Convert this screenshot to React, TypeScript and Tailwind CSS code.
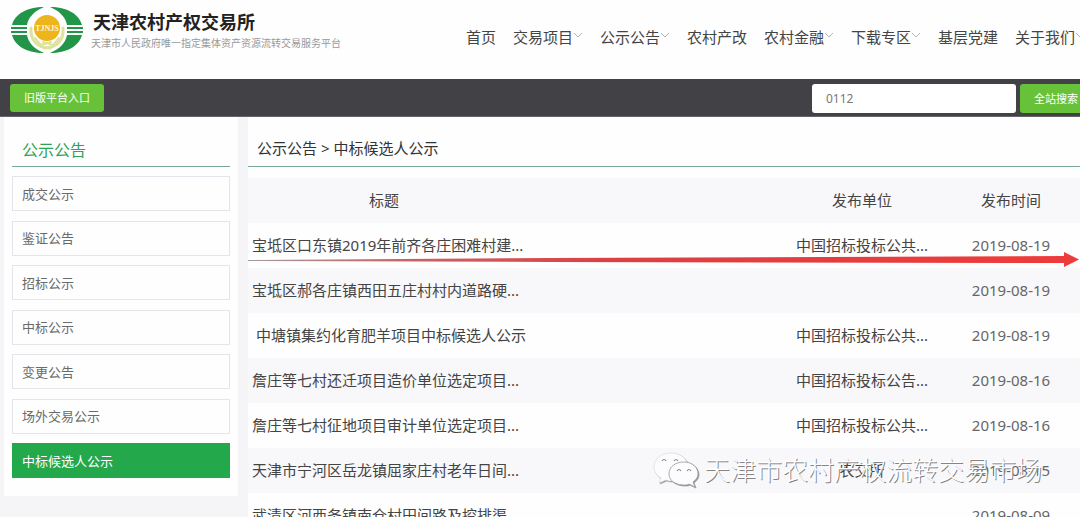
import clsx from "clsx";

const navItems = [
  { label: "首页", menu: false },
  { label: "交易项目", menu: true },
  { label: "公示公告", menu: true },
  { label: "农村产改", menu: false },
  { label: "农村金融", menu: true },
  { label: "下载专区", menu: true },
  { label: "基层党建", menu: false },
  { label: "关于我们", menu: true },
];

const categories = [
  "成交公示",
  "鉴证公告",
  "招标公示",
  "中标公示",
  "变更公告",
  "场外交易公示",
  "中标候选人公示",
];

const notices = [
  { title: "宝坻区口东镇2019年前齐各庄困难村建...", unit: "中国招标投标公共...", date: "2019-08-19" },
  { title: "宝坻区郝各庄镇西田五庄村村内道路硬...", unit: "", date: "2019-08-19" },
  { title: " 中塘镇集约化育肥羊项目中标候选人公示", unit: "中国招标投标公共...", date: "2019-08-19" },
  { title: "詹庄等七村还迁项目造价单位选定项目...", unit: "中国招标投标公告...", date: "2019-08-16" },
  { title: "詹庄等七村征地项目审计单位选定项目...", unit: "中国招标投标公共...", date: "2019-08-16" },
  { title: "天津市宁河区岳龙镇屈家庄村老年日间...", unit: "农交所", date: "2019-08-15" },
  { title: "武清区河西务镇南仓村田间路及挖排渠...", unit: "", date: "2019-08-09" },
];

function Logo() {
  return (
    <svg viewBox="0 0 72 48" className="w-[72px] h-12 shrink-0" aria-hidden="true">
      <g fill="#219548">
        <path d="M33 1C16 1 4 8 1 19H16C17 12 23 5 33 1Z" />
        <path d="M39 1C56 1 68 8 71 19H56C55 12 49 5 39 1Z" />
        <path d="M33 47C16 47 4 40 1 29H16C17 36 23 43 33 47Z" />
        <path d="M39 47C56 47 68 40 71 29H56C55 36 49 43 39 47Z" />
        <path d="M0 21H16V23H0ZM0 25H16V27H0ZM56 21H72V23H56ZM56 25H72V27H56Z" />
      </g>
      <g fill="none" stroke="#dde39c" strokeLinecap="round">
        <path d="M20 22C19 34 26 42 39 42" strokeWidth="3" />
        <path d="M52 22C53 34 46 42 33 42" strokeWidth="3" />
        <path d="M24 32L29 38M48 32L43 38M30 39L40 36M42 39L32 36" strokeWidth="2" />
      </g>
      <circle cx="36" cy="22" r="13" fill="#eeb41c" />
      <text
        x="36"
        y="25"
        textAnchor="middle"
        fill="#fff6d0"
        fontFamily="Liberation Serif, serif"
        fontWeight="bold"
        fontSize="8"
      >
        TJNJS
      </text>
    </svg>
  );
}

function Caret() {
  return (
    <svg viewBox="0 0 10 6" className="w-[10px] h-[6px] mb-1" fill="none" stroke="#b4b4b4" aria-hidden="true">
      <path d="M1 1L5 5L9 1" />
    </svg>
  );
}

function Header() {
  return (
    <header className="h-[79px] bg-[#fefefe] flex items-start">
      <a href="#" className="flex items-start gap-2 pl-[11px] pt-[6px] shrink-0">
        <Logo />
        <span className="pt-[4px]">
          <strong className="block pl-[2px] text-[18px] leading-6 text-[#222]">天津农村产权交易所</strong>
          <span className="block text-[10px] leading-[18px] text-[#999]">
            天津市人民政府唯一指定集体资产资源流转交易服务平台
          </span>
        </span>
      </a>
      <nav className="ml-auto -mr-[5px] pt-[25px] flex gap-[17px] shrink-0">
        {navItems.map((item) => (
          <a key={item.label} href="#" className="flex items-center text-[15px] leading-6 text-[#444] whitespace-nowrap">
            {item.label}
            {item.menu && <Caret />}
          </a>
        ))}
      </nav>
    </header>
  );
}

function Toolbar() {
  return (
    <div className="h-[38px] bg-[#424146] border-b border-[#666569] flex items-center justify-between pl-[10px] overflow-hidden">
      <button type="button" className="h-7 w-[94px] pt-[2px] rounded-[3px] bg-[#67c23a] text-[11px] text-white">
        旧版平台入口
      </button>
      <form className="flex items-center gap-1 -mr-3 pt-[2px]">
        <input
          type="text"
          aria-label="全站搜索"
          defaultValue="0112"
          className="w-[204px] h-[29px] rounded-[3px] bg-white px-[14px] text-[12px] text-[#777] outline-none"
        />
        <button type="button" className="h-[29px] w-[72px] pt-[2px] rounded-[3px] bg-[#67c23a] text-[11px] text-white">
          全站搜索
        </button>
      </form>
    </div>
  );
}

function Sidebar() {
  return (
    <aside className="w-[234px] shrink-0 self-start bg-[#fefefe] px-2 pb-[18px]">
      <h2 className="h-[50px] pt-[21px] pl-[10px] border-b border-[#76a795] text-[16px] leading-6 text-[#2fa354]">
        公示公告
      </h2>
      <ul className="mt-[9px] min-h-[302px] flex flex-col justify-between">
        {categories.map((name, idx) => {
          const active = idx === categories.length - 1;
          return (
            <li key={name}>
              <a
                href="#"
                className={clsx(
                  "flex items-center h-[35px] px-[9px] pt-[2px] border text-[13px]",
                  active ? "bg-[#23a84c] border-[#23a84c] text-white" : "border-[#e4e4ea] text-[#6a6a6a]"
                )}
              >
                {name}
              </a>
            </li>
          );
        })}
      </ul>
    </aside>
  );
}

function NoticeTable() {
  return (
    <table className="mt-[11px] w-full table-fixed text-[15px] text-[#444]">
      <colgroup>
        <col className="w-[272px]" />
        <col />
        <col className="w-[160px]" />
        <col className="w-[138px]" />
      </colgroup>
      <thead>
        <tr className="h-[45px] bg-[#f8f8fa]">
          <th className="font-normal">标题</th>
          <th />
          <th className="font-normal">发布单位</th>
          <th className="font-normal">发布时间</th>
        </tr>
      </thead>
      <tbody>
        {notices.map((row) => (
          <tr key={row.title} className="h-[45px] even:bg-[#f8f7fa]">
            <td colSpan={2} className="pl-1 whitespace-pre">
              <a href="#">{row.title}</a>
            </td>
            <td className="text-center whitespace-nowrap">{row.unit}</td>
            <td className="text-center text-[#666]">{row.date}</td>
          </tr>
        ))}
      </tbody>
    </table>
  );
}

function Arrow() {
  return (
    <div className="absolute inset-x-0 top-[135px] flex items-center pointer-events-none">
      <svg viewBox="0 0 816 16" preserveAspectRatio="none" className="flex-1 min-w-0 h-4" aria-hidden="true">
        <defs>
          <linearGradient id="shaft" x1="0" x2="1" y1="0" y2="0">
            <stop offset="0" stopColor="#a59a9c" />
            <stop offset="0.2" stopColor="#c96264" />
            <stop offset="0.45" stopColor="#dd3f42" />
            <stop offset="1" stopColor="#ee3b3b" />
          </linearGradient>
        </defs>
        <path d="M0 8L300 6L816 4V11L300 10L0 9Z" fill="url(#shaft)" />
      </svg>
      <svg viewBox="0 0 16 16" className="size-4 shrink-0" aria-hidden="true">
        <path d="M0 0L15 7.5L0 15Z" fill="#ee3b3b" />
      </svg>
    </div>
  );
}

function Watermark() {
  return (
    <div className="absolute right-[38px] top-[333px] flex items-center gap-[5px] pointer-events-none">
      <svg
        viewBox="0 0 46 40"
        className="w-[46px] h-10 drop-shadow-[1px_1px_0px_#999]"
        fill="#fcfbfd"
        aria-hidden="true"
      >
        <path
          d="M18 3C8 3 1 9 1 17C1 22 4 26 8 28L6 33L13 30C15 31 18 31 20 31C31 31 36 24 35 16C34 8 27 3 18 3Z"
          stroke="#d5d5d8"
          strokeWidth="0.6"
        />
        <path
          d="M31 12C22 12 16 17 16 24C16 31 23 35 31 35C33 35 35 35 36 34L42 37L40 32C43 30 45 27 45 24C45 17 39 12 31 12Z"
          stroke="#999"
          strokeWidth="0.8"
        />
        <g fill="none" stroke="#888" strokeWidth="1.2">
          <path d="M9 11Q11 8 13 11M21 11Q23 8 25 11M24 21Q26 18 28 21M34 21Q36 18 38 21" />
        </g>
      </svg>
      <span className="text-[26px] leading-10 font-light text-white whitespace-nowrap [text-shadow:1px_1px_0_#858585]">
        天津市农村产权流转交易市场
      </span>
    </div>
  );
}

export default function App() {
  return (
    <div className="h-screen overflow-hidden bg-[#f5f4f7] font-['Noto_Sans','Noto_Sans_CJK_SC',sans-serif]">
      <Header />
      <Toolbar />
      <div className="flex gap-[10px] pl-1">
        <Sidebar />
        <main className="relative flex-1 min-w-0 bg-[#fefefe]">
          <h1 className="h-[50px] pt-[19px] pl-[9px] border-b border-[#76a795] text-[15px] leading-6 text-[#333]">
            公示公告 &gt; 中标候选人公示
          </h1>
          <NoticeTable />
          <Arrow />
          <Watermark />
        </main>
      </div>
    </div>
  );
}
